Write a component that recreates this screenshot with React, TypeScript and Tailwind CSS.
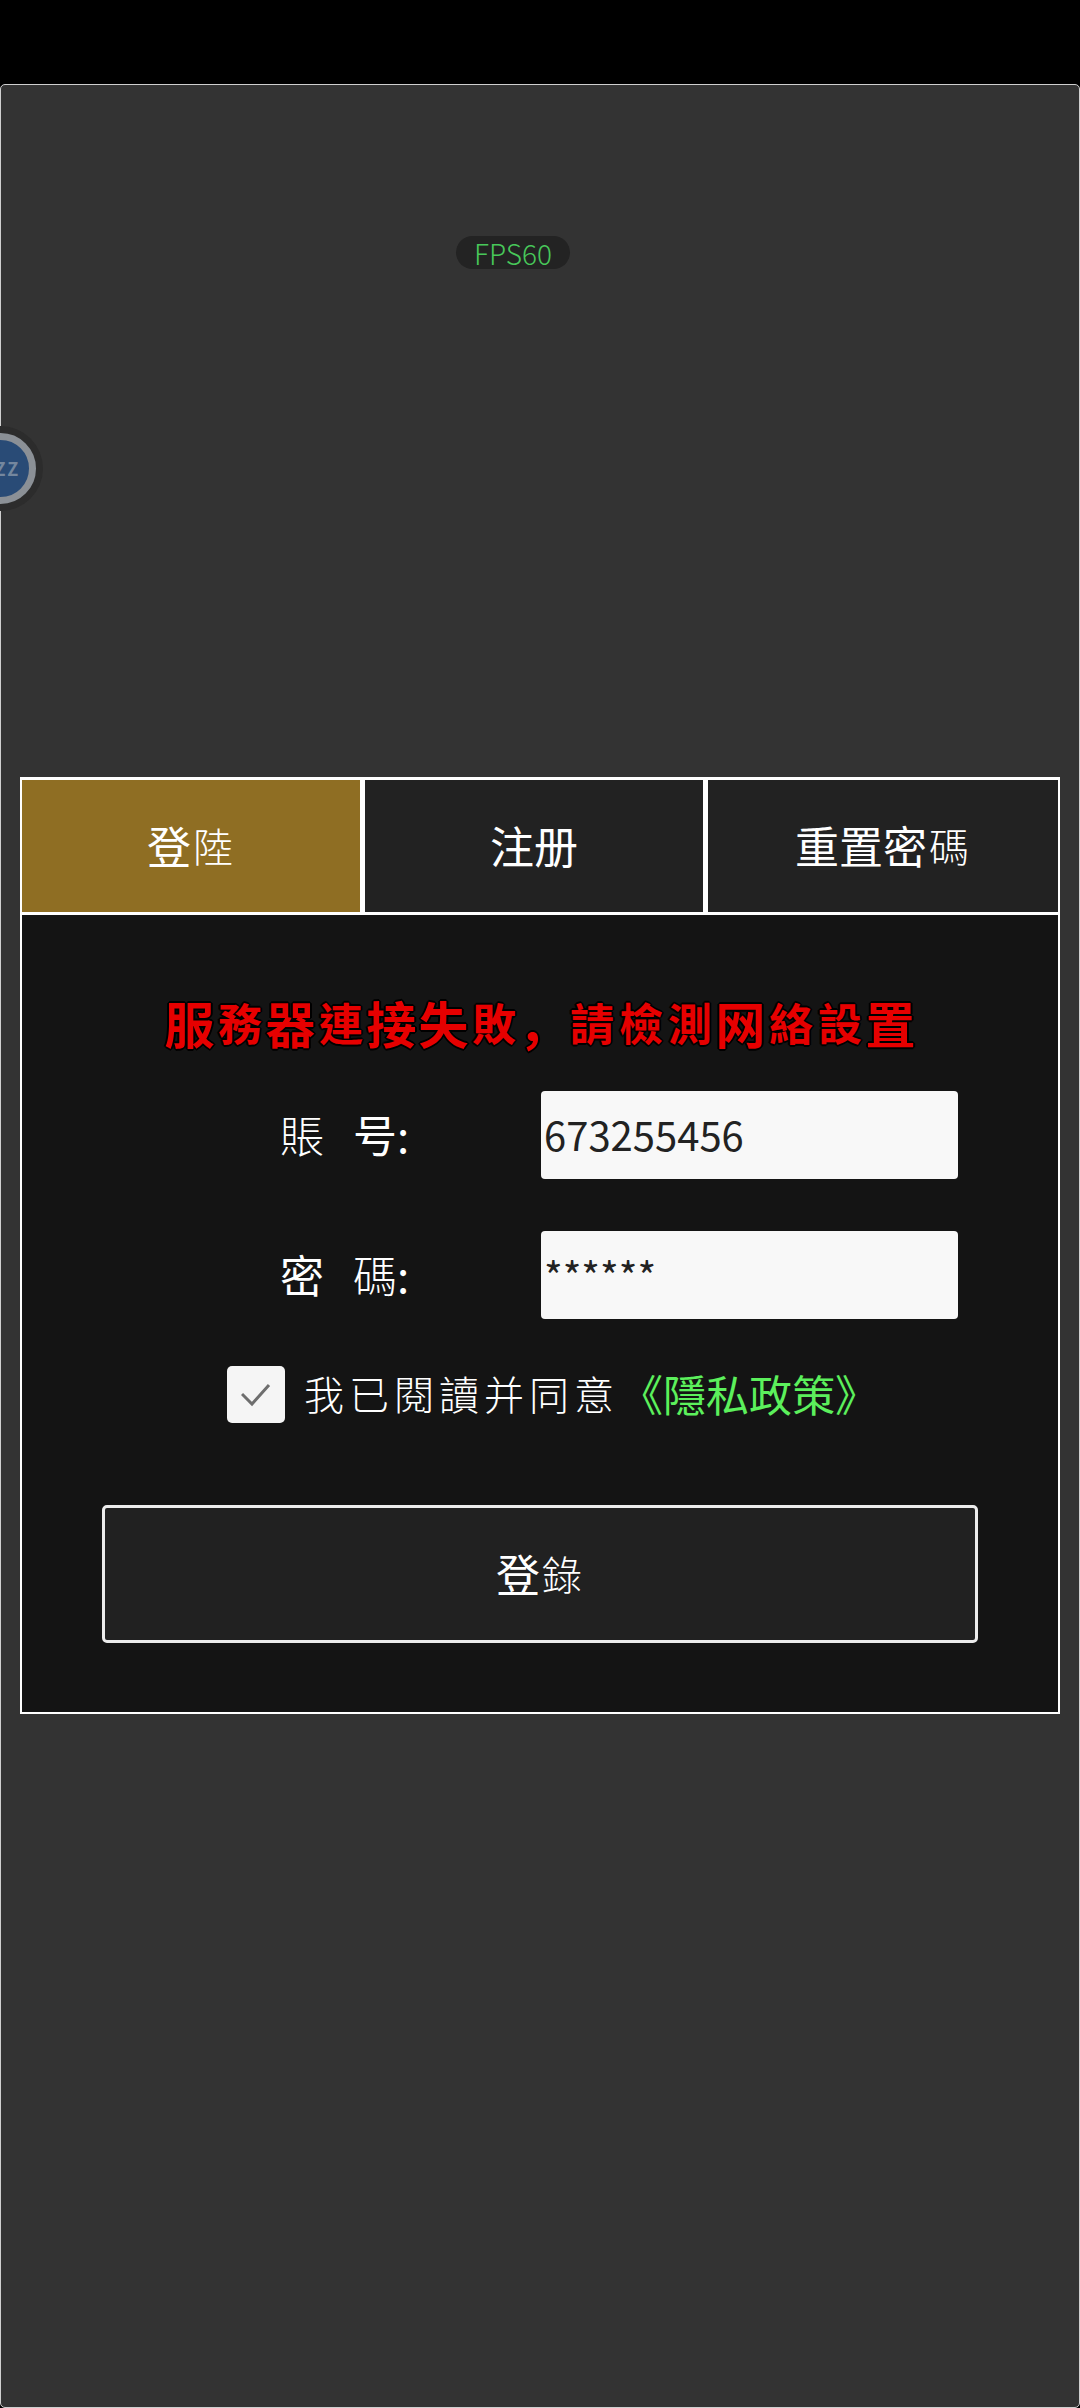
const sans = "font-['Noto_Sans_CJK_TC','Noto_Sans_CJK_SC',sans-serif]";

function G({ c, cls }: { c: string; cls: string }) {
  return <span className={`inline-block text-center ${cls}`}>{c}</span>;
}

function Tab({ children, active, grow }: { children: React.ReactNode; active?: boolean; grow?: boolean }) {
  return (
    <div
      className={`flex h-[132px] items-center justify-center pb-[3px] text-[44px] leading-none text-white ${grow ? "flex-1" : "w-[338px]"} ${active ? "bg-[#8f6e23]" : "bg-[#222222]"}`}
    >
      {children}
    </div>
  );
}

const small = "w-[44px] text-[40px] font-light";

function App() {
  const title: [string, boolean][] = [
    ["服", true], ["務", false], ["器", true], ["連", false], ["接", true], ["失", true], ["敗", false], ["，", false],
    ["請", false], ["檢", false], ["測", false], ["网", true], ["絡", false], ["設", false], ["置", true],
  ];
  return (
    <div className={`flex h-[2408px] w-[1080px] flex-col overflow-hidden bg-black ${sans}`}>
      <div className="h-[84px] shrink-0" />
      <div className="relative flex-1 rounded-[5px] border border-[#cfcfcf] bg-[#333333] pt-[692px]">
        <div className="absolute left-[455px] top-[151px] flex h-[33px] w-[114px] items-center justify-center rounded-full bg-[#232323] text-[28px] font-light leading-none text-[#48c85a]">
          FPS60
        </div>
        <div className="absolute left-[-36px] top-[348px] flex h-[71px] w-[71px] items-center justify-center overflow-hidden rounded-full border-[7px] border-[#8b9096] bg-[#294b76] pl-[14px] text-[18px] font-bold tracking-[2px] text-[#74879e] shadow-[0_0_0_7px_#2c2c2c]">
          ZZ
        </div>

        <div className="mx-[19px] border-x-2 border-b-2 border-white bg-[#141414]">
          <div className="flex gap-[5px] border-y-[3px] border-white bg-white">
            <Tab active>
              <span>登</span>
              <G c="陸" cls={small} />
            </Tab>
            <Tab>注册</Tab>
            <Tab grow>
              重置密
              <G c="碼" cls={small} />
            </Tab>
          </div>

          <div className="mt-[79px] flex h-[60px] items-center justify-center pb-[4px] text-[50px] font-bold leading-none text-[#e60000] [text-shadow:2px_0_0_#000,-2px_0_0_#000,0_2px_0_#000,0_-2px_0_#000,1px_1px_0_#000,-1px_-1px_0_#000,1px_-1px_0_#000,-1px_1px_0_#000]">
            {title.map(([c, big], i) => (
              <G
                key={i}
                c={c}
                cls={big ? "w-[52px]" : c === "，" ? "w-[49px] text-[50px] font-['Noto_Sans_CJK_SC',sans-serif]" : "w-[49px] text-[44px]"}
              />
            ))}
          </div>

          <div className="mt-[37px] flex h-[88px] items-center pl-[258px]">
            <div className="flex w-[261px] items-center pb-[3px] text-[44px] leading-none text-white">
              <span className="font-light">賬</span>
              <span className="ml-[29px]">号:</span>
            </div>
            <input
              readOnly
              value="673255456"
              className="h-[88px] w-[417px] rounded-[4px] bg-[#f8f8f8] pb-[3px] pl-[3px] text-[40px] text-[#222222] outline-none"
            />
          </div>

          <div className="mt-[52px] flex h-[88px] items-center pl-[258px]">
            <div className="flex w-[261px] items-center pb-[3px] text-[44px] leading-none text-white">
              <span>密</span>
              <span className="ml-[29px] font-light">碼</span>
              <span>:</span>
            </div>
            <input
              readOnly
              value="******"
              className="h-[88px] w-[417px] rounded-[4px] bg-[#f8f8f8] pl-[3px] text-[40px] text-[#222222] outline-none"
            />
          </div>

          <div className="mt-[47px] flex h-[57px] items-center pl-[205px]">
            <div className="flex h-[57px] w-[58px] shrink-0 items-center justify-center rounded-[5px] bg-[#f5f5f5]">
              <svg width="30" height="24" viewBox="0 0 30 24" fill="none" stroke="#6e6e6e" strokeWidth="3">
                <path d="M1 11 L11 21 L28 2" />
              </svg>
            </div>
            <span className="ml-[19px] pb-[3px] text-[40px] font-light leading-none tracking-[5px] text-white">我已閱讀并同意</span>
            <span className="ml-[1px] pb-[3px] text-[43px] leading-none text-[#5cf05c]">《隱私政策》</span>
          </div>

          <div className="mb-[69px] ml-[80px] mt-[82px] flex h-[138px] w-[876px] items-center justify-center rounded-[5px] border-[3px] border-[#ececec] bg-[#212121] pb-[3px] text-[44px] leading-none text-white">
            <span>登</span>
            <G c="錄" cls={small} />
          </div>
        </div>
      </div>
    </div>
  );
}

export default App;
